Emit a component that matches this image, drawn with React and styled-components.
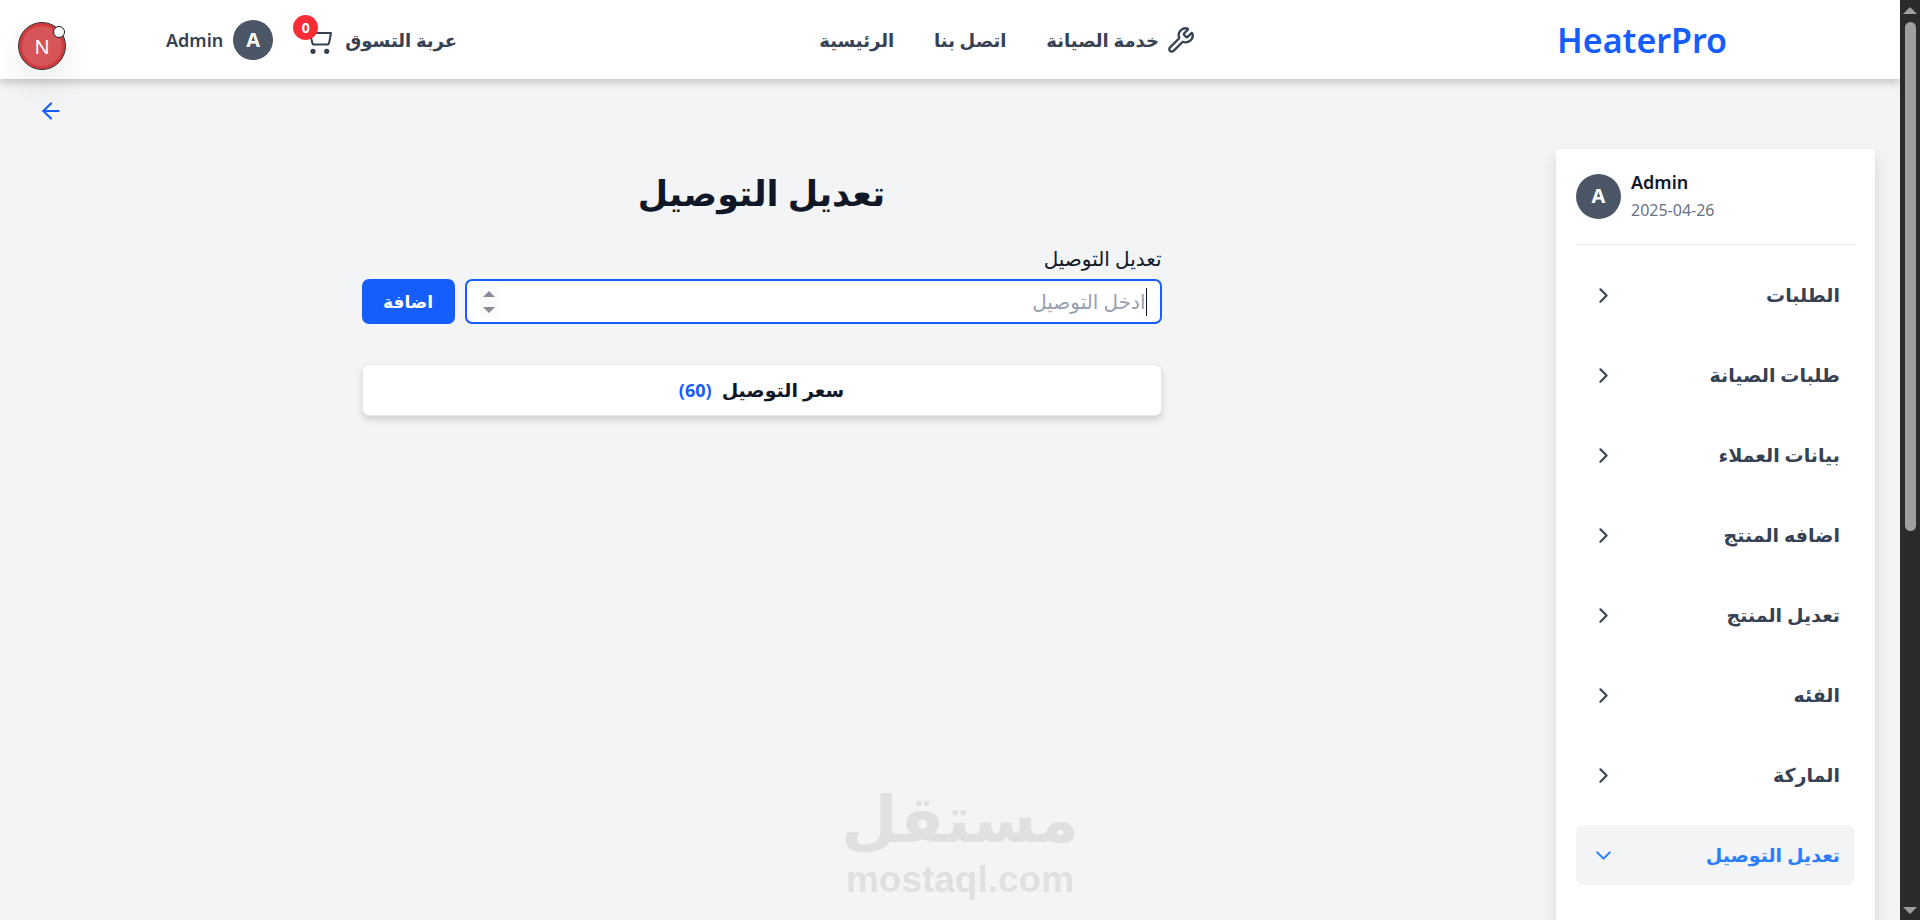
import React from 'react';
import styled, { createGlobalStyle } from 'styled-components';
import { ArrowLeft, ChevronDown, ChevronRight, Wrench } from 'lucide-react';

const GlobalStyle = createGlobalStyle`
  * {
    box-sizing: border-box;
  }

  body {
    margin: 0;
    background-color: #f3f4f6;
    color: #101828;
    font-family: 'Noto Sans', 'DejaVu Sans', sans-serif;
    font-size: 16px;
    line-height: 24px;
  }

  button,
  input {
    font-family: inherit;
  }
`;

const Window = styled.div`
  display: flex;
  height: 100vh;
  overflow: hidden;
`;

const Page = styled.div`
  flex: 1;
  min-width: 0;
  overflow: hidden;
`;

const Header = styled.header`
  position: relative;
  background-color: #fff;
  box-shadow: 0 4px 8px rgba(0, 0, 0, 0.18);
`;

const Bar = styled.div`
  display: flex;
  align-items: center;
  justify-content: space-between;
  height: 79px;
  padding: 0 173px 0 166px;
`;

const Logo = styled.a`
  color: #155dfc;
  font-size: 34px;
  font-weight: 600;
  line-height: 40px;
  text-decoration: none;
`;

const Nav = styled.nav`
  display: flex;
  align-items: center;
  gap: 40px;
`;

const NavLink = styled.a`
  display: flex;
  align-items: center;
  gap: 8px;
  color: #364153;
  font-size: 18px;
  font-weight: 700;
  text-decoration: none;
`;

const CartLink = styled(NavLink)`
  gap: 12px;
`;

const Account = styled.div`
  display: flex;
  align-items: center;
  gap: 32px;
`;

const CartIcon = styled.span`
  position: relative;
  display: flex;
`;

const Badge = styled.span`
  position: absolute;
  top: -11px;
  left: -12px;
  width: 25px;
  height: 25px;
  border-radius: 50%;
  background-color: #fb2c36;
  color: #fff;
  font-size: 14px;
  font-weight: 700;
  line-height: 25px;
  text-align: center;
`;

const User = styled.div`
  display: flex;
  align-items: center;
  gap: 10px;
  color: #364153;
  font-size: 18px;
  font-weight: 600;
`;

const Avatar = styled.span`
  display: flex;
  align-items: center;
  justify-content: center;
  width: ${(props) => props.$size}px;
  height: ${(props) => props.$size}px;
  border-radius: 50%;
  background-color: #4a5565;
  color: #fff;
  font-size: 20px;
  font-weight: 700;
`;

const DevBadge = styled.button`
  position: absolute;
  top: 22px;
  left: 18px;
  width: 48px;
  height: 48px;
  padding: 0;
  border: 1px solid #333;
  border-radius: 50%;
  background-color: #d55558;
  box-shadow: inset 0 0 0 3px #cf3a3d, 0 16px 32px rgba(0, 0, 0, 0.08);
  color: #fff;
  font-size: 20px;
`;

const DevDot = styled.span`
  position: absolute;
  top: 3px;
  right: 0;
  width: 12px;
  height: 12px;
  border: 1px solid #101828;
  border-radius: 50%;
  background-color: #fff;
`;

const BackRow = styled.div`
  display: flex;
  justify-content: flex-end;
  padding: 19px 38px 0;
`;

const BackLink = styled.a`
  display: flex;
  color: #155dfc;
`;

const Layout = styled.div`
  display: flex;
  align-items: flex-start;
  gap: 58px;
  padding: 25px 25px 0;
`;

const Sidebar = styled.aside`
  flex: none;
  width: 319px;
  min-height: 900px;
  padding: 19px 20px;
  border-radius: 4px;
  background-color: #fff;
  box-shadow: 0 8px 16px rgba(0, 0, 0, 0.12);
`;

const Profile = styled.div`
  display: flex;
  align-items: center;
  gap: 10px;
  padding-bottom: 20px;
  border-bottom: 1px solid #e5e7eb;
`;

const ProfileName = styled.div`
  font-size: 18px;
  font-weight: 600;
  line-height: 28px;
`;

const ProfileDate = styled.div`
  color: #6a7282;
  font-size: 16px;
  line-height: 28px;
`;

const Menu = styled.ul`
  display: flex;
  flex-direction: column;
  gap: 20px;
  margin: 20px 0 0;
  padding: 0;
  list-style: none;
`;

const MenuButton = styled.button`
  display: flex;
  align-items: center;
  justify-content: space-between;
  width: 100%;
  height: 60px;
  padding: 0 15px;
  border: none;
  border-radius: 8px;
  background-color: ${(props) => (props.$active ? '#f3f4f6' : 'transparent')};
  color: ${(props) => (props.$active ? '#2b7fff' : '#364153')};
  font-size: 19px;
  font-weight: 700;
  cursor: pointer;
`;

const Main = styled.main`
  flex: 1;
  min-width: 0;
`;

const Content = styled.div`
  max-width: 800px;
  margin: 0 auto;
`;

const Title = styled.h1`
  margin: 20px 0 30px;
  font-size: 35px;
  font-weight: 700;
  line-height: 48px;
  text-align: center;
`;

const Label = styled.label`
  display: block;
  margin-bottom: 8px;
  font-size: 20px;
`;

const Field = styled.div`
  display: flex;
  gap: 10px;
`;

const NumberBox = styled.div`
  display: flex;
  flex: 1;
  align-items: center;
  height: 45px;
  padding: 0 13px;
  border: 2px solid #155dfc;
  border-radius: 7px;
  background-color: #fff;
`;

const NumberInput = styled.input`
  flex: 1;
  min-width: 0;
  height: 28px;
  padding: 0;
  border: none;
  border-right: 1px solid #101828;
  outline: none;
  background: transparent;
  font-size: 20px;
  appearance: textfield;

  &::placeholder {
    color: #99a1af;
    opacity: 1;
  }
`;

const Spinner = styled.span`
  display: flex;
  flex-direction: column;
  align-items: center;
  justify-content: space-between;
  width: 19px;
  height: 30px;
  padding: 4px 0;
  background-color: #fafafa;
`;

const Arrow = styled.span`
  border: 6px solid transparent;
  border-${(props) => (props.$up ? 'top' : 'bottom')}-width: 0;
  border-${(props) => (props.$up ? 'bottom' : 'top')}: 6px solid #868b94;
`;

const AddButton = styled.button`
  width: 93px;
  border: none;
  border-radius: 7px;
  background-color: #155dfc;
  color: #fff;
  font-size: 17px;
  font-weight: 700;
  cursor: pointer;
`;

const PriceCard = styled.div`
  display: flex;
  align-items: center;
  justify-content: center;
  gap: 10px;
  height: 52px;
  margin-top: 40px;
  border: 1px solid #e5e7eb;
  border-radius: 7px;
  background-color: #fff;
  box-shadow: 0 4px 6px rgba(0, 0, 0, 0.14);
  font-size: 19px;
  font-weight: 700;
`;

const Price = styled.span`
  color: #155dfc;
  font-size: 18px;
`;

const Watermark = styled.div`
  position: fixed;
  bottom: 20px;
  left: 50%;
  display: flex;
  flex-direction: column;
  align-items: center;
  transform: translateX(-50%);
  color: #dfe0e2;
  font-weight: 700;
  pointer-events: none;
`;

const WatermarkName = styled.span`
  font-family: 'DejaVu Sans', sans-serif;
  font-size: 65px;
  line-height: 80px;
`;

const WatermarkSite = styled.span`
  font-family: 'Liberation Sans', sans-serif;
  font-size: 37px;
  line-height: 40px;
`;

const Scrollbar = styled.div`
  display: flex;
  flex-direction: column;
  align-items: center;
  justify-content: space-between;
  width: 20px;
  padding: 7px 0 6px;
  background-color: #2b2b2b;
`;

const Track = styled.div`
  flex: 1;
  padding: 8px 0;
`;

const Thumb = styled.div`
  width: 11px;
  height: 58%;
  border-radius: 6px;
  background-color: #9f9f9f;
`;

const ScrollArrow = styled.span`
  border: 7px solid transparent;
  border-${(props) => (props.$up ? 'top' : 'bottom')}-width: 0;
  border-${(props) => (props.$up ? 'bottom' : 'top')}: 7px solid #9f9f9f;
`;

const menuItems = [
  'الطلبات',
  'طلبات الصيانة',
  'بيانات العملاء',
  'اضافه المنتج',
  'تعديل المنتج',
  'الفئه',
  'الماركة',
  'تعديل التوصيل',
];

function Cart() {
  return (
    <svg width="28" height="28" viewBox="0 0 28 28" fill="none" stroke="currentColor" strokeWidth="2" strokeLinejoin="round">
      <path d="M0 2h4l1 5h21l-1.8 9.5a2.4 2.4 0 0 1-2.4 2H9.6a2.4 2.4 0 0 1-2.4-2L5 7" />
      <circle cx="8" cy="25.3" r="2.6" fill="currentColor" stroke="none" />
      <circle cx="21.7" cy="25.3" r="2.6" fill="currentColor" stroke="none" />
    </svg>
  );
}

function App() {
  return (
    <>
      <GlobalStyle />
      <Window>
        <Page dir="rtl">
          <Header>
            <Bar>
              <Logo href="#">HeaterPro</Logo>
              <Nav>
                <NavLink href="#">
                  <Wrench size={28} />
                  خدمة الصيانة
                </NavLink>
                <NavLink href="#">اتصل بنا</NavLink>
                <NavLink href="#">الرئيسية</NavLink>
              </Nav>
              <Account>
                <CartLink href="#">
                  عربة التسوق
                  <CartIcon>
                    <Cart />
                    <Badge>0</Badge>
                  </CartIcon>
                </CartLink>
                <User>
                  <Avatar $size={40}>A</Avatar>
                  Admin
                </User>
              </Account>
            </Bar>
            <DevBadge type="button">
              N
              <DevDot />
            </DevBadge>
          </Header>

          <BackRow>
            <BackLink href="#" aria-label="رجوع">
              <ArrowLeft size={26} />
            </BackLink>
          </BackRow>

          <Layout>
            <Sidebar>
              <Profile dir="ltr">
                <Avatar $size={45}>A</Avatar>
                <div>
                  <ProfileName>Admin</ProfileName>
                  <ProfileDate>2025-04-26</ProfileDate>
                </div>
              </Profile>
              <Menu>
                {menuItems.map((item) => {
                  const active = item === 'تعديل التوصيل';
                  return (
                    <li key={item}>
                      <MenuButton type="button" $active={active}>
                        {item}
                        {active ? <ChevronDown size={25} /> : <ChevronRight size={25} />}
                      </MenuButton>
                    </li>
                  );
                })}
              </Menu>
            </Sidebar>

            <Main>
              <Content>
                <Title>تعديل التوصيل</Title>
                <form>
                  <Label htmlFor="delivery">تعديل التوصيل</Label>
                  <Field>
                    <NumberBox>
                      <NumberInput type="number" id="delivery" name="delivery" placeholder="ادخل التوصيل" />
                      <Spinner>
                        <Arrow $up />
                        <Arrow />
                      </Spinner>
                    </NumberBox>
                    <AddButton type="submit">اضافة</AddButton>
                  </Field>
                </form>
                <PriceCard>
                  <span>سعر التوصيل</span>
                  <Price>(60)</Price>
                </PriceCard>
              </Content>
            </Main>
          </Layout>
        </Page>
        <Scrollbar>
          <ScrollArrow $up />
          <Track>
            <Thumb />
          </Track>
          <ScrollArrow />
        </Scrollbar>
      </Window>
      <Watermark>
        <WatermarkName>مستقل</WatermarkName>
        <WatermarkSite>mostaql.com</WatermarkSite>
      </Watermark>
    </>
  );
}

export default App;
